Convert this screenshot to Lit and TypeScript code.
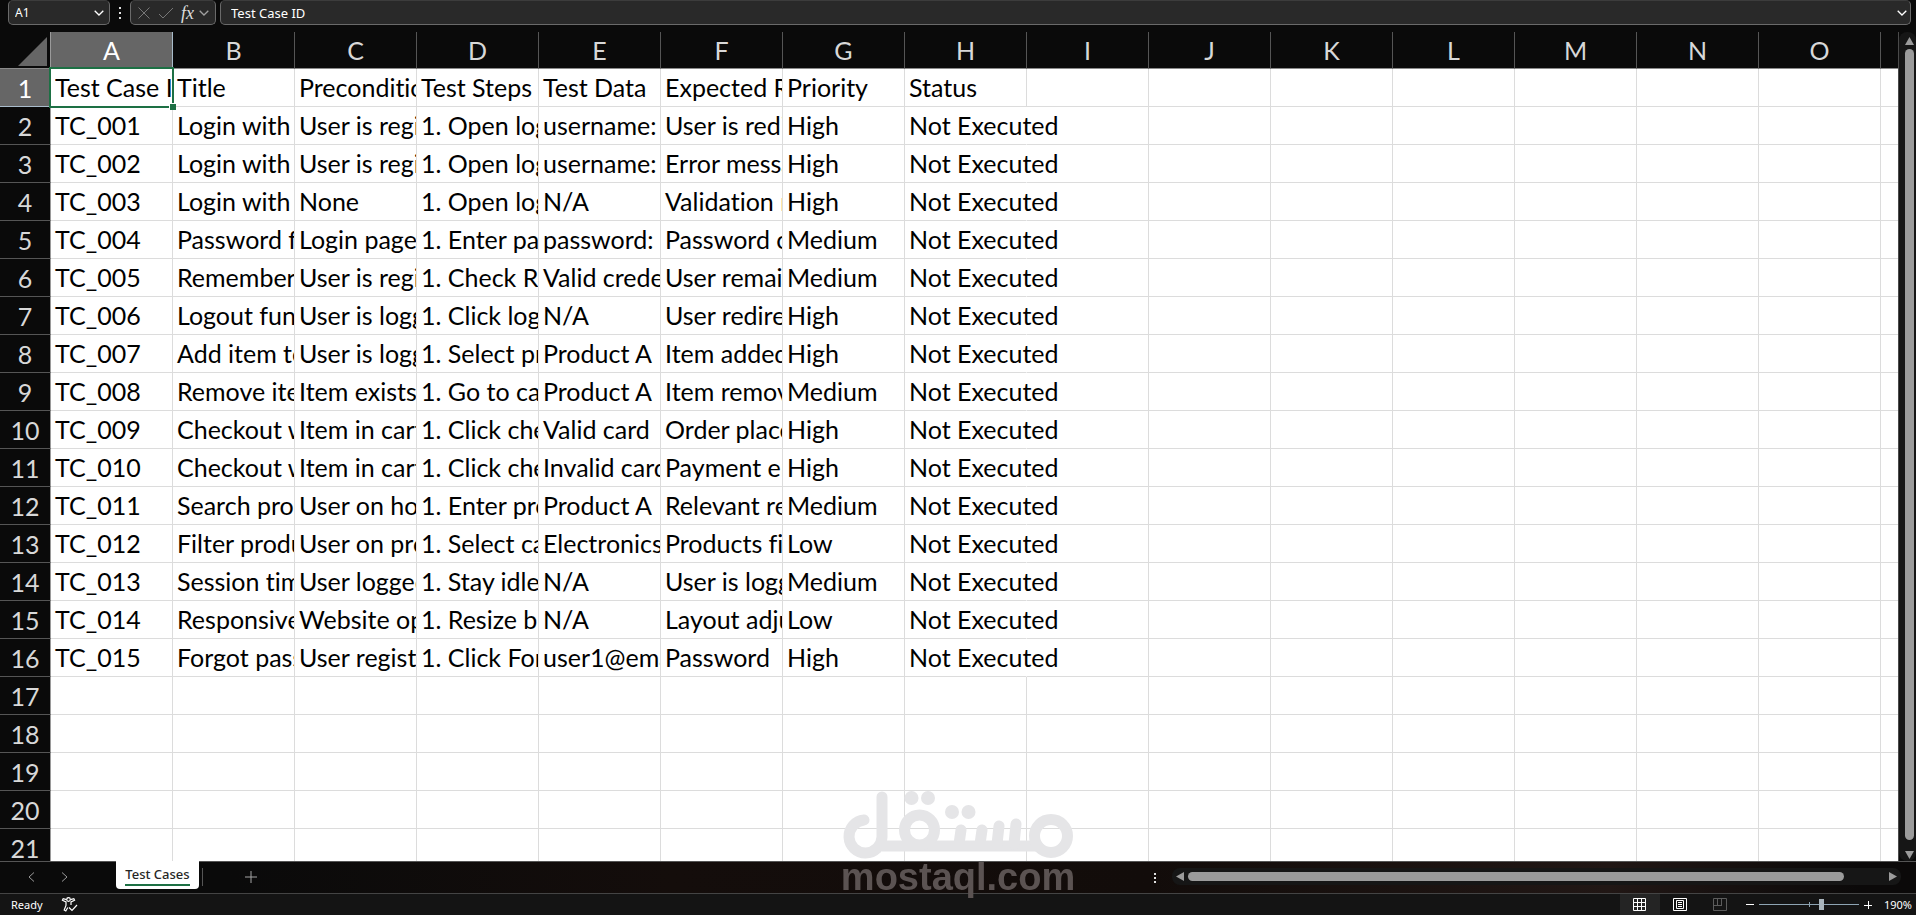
import { LitElement, html, css } from "lit";
import { customElement, state } from "lit/decorators.js";

const COLUMNS = "ABCDEFGHIJKLMNO".split("");
const ROW_COUNT = 21;

const CELLS: string[][] = [
  ["Test Case ID", "Title", "Preconditions", "Test Steps", "Test Data", "Expected Result", "Priority", "Status"],
  ["TC_001", "Login with valid", "User is registered", "1. Open login page", "username: user1", "User is redirected", "High", "Not Executed"],
  ["TC_002", "Login with invalid", "User is registered", "1. Open login page", "username: user1", "Error message", "High", "Not Executed"],
  ["TC_003", "Login with empty", "None", "1. Open login page", "N/A", "Validation messages", "High", "Not Executed"],
  ["TC_004", "Password field", "Login page open", "1. Enter password", "password: 123", "Password characters", "Medium", "Not Executed"],
  ["TC_005", "Remember me", "User is registered", "1. Check Remember", "Valid credentials", "User remains", "Medium", "Not Executed"],
  ["TC_006", "Logout functionality", "User is logged in", "1. Click logout", "N/A", "User redirected", "High", "Not Executed"],
  ["TC_007", "Add item to cart", "User is logged in", "1. Select product", "Product A", "Item added", "High", "Not Executed"],
  ["TC_008", "Remove item", "Item exists in cart", "1. Go to cart", "Product A", "Item removed", "Medium", "Not Executed"],
  ["TC_009", "Checkout with valid", "Item in cart", "1. Click checkout", "Valid card", "Order placed", "High", "Not Executed"],
  ["TC_010", "Checkout with invalid", "Item in cart", "1. Click checkout", "Invalid card", "Payment error", "High", "Not Executed"],
  ["TC_011", "Search product", "User on homepage", "1. Enter product", "Product A", "Relevant results", "Medium", "Not Executed"],
  ["TC_012", "Filter products", "User on products", "1. Select category", "Electronics", "Products filtered", "Low", "Not Executed"],
  ["TC_013", "Session timeout", "User logged in", "1. Stay idle", "N/A", "User is logged out", "Medium", "Not Executed"],
  ["TC_014", "Responsive layout", "Website open", "1. Resize browser", "N/A", "Layout adjusts", "Low", "Not Executed"],
  ["TC_015", "Forgot password", "User registered", "1. Click Forgot", "user1@email.com", "Password", "High", "Not Executed"],
];

const chevron = html`<svg class="chevron" viewBox="0 0 10 6" aria-hidden="true">
  <path d="M.7.7 5 5 9.3.7" />
</svg>`;

@customElement("app-root")
export class AppRoot extends LitElement {
  @state() private zoomLevel = 190;

  static styles = css`
    :host {
      display: flex;
      flex-direction: column;
      height: 100vh;
      overflow: hidden;
      position: relative;
      background: #0a0a0a;
      color: #fff;
      font-family: "Noto Sans", sans-serif;
      font-size: 12px;
    }
    * { box-sizing: border-box; }
    button, input {
      font: inherit;
      color: inherit;
      background: none;
      border: 0;
      padding: 0;
      margin: 0;
    }
    svg { display: block; fill: none; stroke: currentColor; }
    .chevron { width: 10px; height: 6px; stroke-width: 1.3; }

    .formula-bar {
      display: flex;
      align-items: stretch;
      height: 32px;
      padding: 0 5px 7px 8px;
      flex: none;
    }
    .box {
      display: flex;
      align-items: center;
      background: #292929;
      border: 1px solid #6a6a6a;
      border-top-color: #3c3c3c;
      border-radius: 5px;
    }
    .name-box { width: 102px; padding: 0 5px 0 6px; }
    .name-box input { flex: 1; min-width: 0; }
    .grip { width: 20px; display: grid; place-items: center; }
    .grip svg { width: 4px; height: 12px; fill: #e0e0e0; stroke: none; }
    .tools { width: 86px; padding: 0 2px 0 6px; gap: 8px; color: #777; }
    .tools .mark { width: 14px; height: 14px; }
    .tools .fx-group { display: flex; align-items: center; gap: 5px; color: #ddd; }
    .tools .chevron { color: #a0a0a0; }
    .fx { font: italic 18px/20px "Liberation Serif", serif; }
    .formula { flex: 1; margin-left: 4px; padding: 0 3px 0 10px; }
    .formula input { flex: 1; min-width: 0; font-size: 13px; }

    .workspace { flex: 1; min-height: 0; display: flex; }
    .sheet { flex: 1; min-width: 0; overflow: hidden; border-right: 1px solid #4a4a4a; }
    table {
      border-collapse: separate;
      border-spacing: 0;
      table-layout: fixed;
      width: 100%;
      font-variant-ligatures: none;
    }
    .col-index { width: 51px; }
    .col { width: 122px; }
    th { font: 400 25px/36px Lato, sans-serif; color: #d8d8d8; padding: 0; background: #0a0a0a; }
    thead th { height: 37px; border-right: 1px solid #555; border-bottom: 1px solid #8a8a8a; }
    thead th:last-child { border-right: 0; }
    thead th:first-child, tbody th { border-right: 1px solid #9a9a9a; }
    thead th.active, tbody th.active { background: #666; color: #fff; border-color: #a9bccb; }
    tbody th { height: 38px; border-bottom: 1px solid #555; }
    .corner svg { width: 29px; height: 29px; margin: 3px 3px 0 auto; fill: #666; stroke: none; }
    td {
      height: 38px;
      padding: 0 0 0 4px;
      background: #fff;
      color: #000;
      border-right: 1px solid #dcdcdc;
      border-bottom: 1px solid #dcdcdc;
      font: 25px/37px Lato, sans-serif;
      font-variant-ligatures: none;
      white-space: nowrap;
      overflow: hidden;
    }
    td:last-child { border-right: 0; }
    td.spill { overflow: visible; border-right-color: #fff; position: relative; z-index: 1; }
    td.selected { position: relative; overflow: visible; }
    .clip { display: block; overflow: hidden; }
    .selected::after {
      content: "";
      position: absolute;
      inset: -2px;
      border: 2px solid #1d7044;
    }
    .handle {
      position: absolute;
      z-index: 1;
      right: -4px;
      bottom: -4px;
      width: 7px;
      height: 7px;
      background: #1d7044;
      border: solid #fff;
      border-width: 1px 0 0 1px;
    }

    .bar { background: #161616; border-radius: 8px; display: flex; align-items: center; color: #9b9b9b; }
    .bar svg { fill: currentColor; stroke: none; flex: none; }
    .thumb { background: #9b9b9b; border-radius: 5px; }
    .vertical { flex-direction: column; width: 17px; padding: 5px 2px 2px 6px; gap: 4px; }
    .vertical .thumb { width: 9px; flex: 1; margin-bottom: 7px; }
    .vertical svg { width: 9px; height: 8px; }

    .tab-bar {
      flex: none;
      display: flex;
      height: 33px;
      border-top: 1px solid #555;
      border-bottom: 1px solid #444;
      background: linear-gradient(90deg, #0a0a0a 12%, #140d0b 35%, #120c0a 60%, #211715 84%, #0b0909 97%);
    }
    .nav { display: flex; align-items: center; gap: 26px; padding: 0 48px 2px 28px; color: #9a9a9a; }
    .nav svg { width: 7px; height: 10px; }
    .tab {
      width: 83px;
      height: 28px;
      margin-top: -1px;
      background: #fff;
      color: #262626;
      border-radius: 0 0 4px 4px;
      font-size: 13px;
      font-weight: 500;
      line-height: 20px;
      white-space: nowrap;
    }
    .tab span { display: inline-block; border-bottom: 2px solid #1d7044; }
    .tab-line { width: 1px; height: 18px; margin: 6px 0 0 3px; background: #555; }
    .add { margin-left: 42px; padding-bottom: 2px; color: #a5a5a5; }
    .add svg { width: 12px; height: 12px; }
    .tab-space { flex: 1; }
    .tab-bar .grip { width: 20px; margin-right: 7px; }
    .horizontal { width: 729px; height: 17px; margin: 6px 15px 0 0; padding: 0 4px; gap: 4px; }
    .horizontal .thumb { height: 9px; flex: 1; margin-right: 41px; }
    .horizontal svg { width: 8px; height: 9px; }

    .status {
      flex: none;
      display: flex;
      align-items: center;
      height: 21px;
      padding: 0 4px 0 11px;
      background: #141414;
      font-size: 11px;
    }
    .access { margin-left: 18px; }
    .access svg { width: 17px; height: 15px; }
    .status-space { flex: 1; }
    .view { width: 40px; height: 21px; display: grid; place-items: center; color: #fff; }
    .view.on { background: #242424; }
    .view svg { width: 14px; height: 13px; }
    .view.dim { color: #5c5c5c; }
    .step svg { width: 8px; height: 8px; }
    .zoom { display: flex; align-items: center; gap: 5px; margin-left: 6px; }
    .slider {
      appearance: none;
      width: 100px;
      height: 11px;
      background:
        linear-gradient(#8ea4b3, #8ea4b3) 50% 50% / 1px 5px no-repeat,
        linear-gradient(#8ea4b3, #8ea4b3) 50% 50% / 100% 1px no-repeat;
    }
    .slider::-webkit-slider-thumb { appearance: none; width: 5px; height: 11px; background: #a9b4bc; }
    .percent { width: 40px; text-align: right; }

    .watermark {
      position: absolute;
      left: 44%;
      bottom: 19px;
      width: 230px;
      pointer-events: none;
      z-index: 5;
    }
    .watermark svg { width: 230px; height: 68px; color: #e5e5e7; mix-blend-mode: multiply; }
    .domain {
      display: flex;
      justify-content: center;
      font: 700 38px/37px "Liberation Sans", sans-serif;
      color: #5b5352;
    }
  `;

  private renderCell(row: number, col: number) {
    const text = CELLS[row]?.[col] ?? "";
    if (row === 0 && col === 0) {
      return html`<td class="selected"><span class="clip">${text}</span><span class="handle"></span></td>`;
    }
    return html`<td class=${col === 7 && row > 0 && text ? "spill" : ""}>${text}</td>`;
  }

  render() {
    return html`
      <div class="formula-bar">
        <div class="box name-box">
          <input aria-label="Name box" .value=${"A1"} />
          <button aria-label="Named ranges">${chevron}</button>
        </div>
        <div class="grip"><svg viewBox="0 0 4 12"><path d="M1 0h2v2H1zM1 5h2v2H1zM1 10h2v2H1z" /></svg></div>
        <div class="box tools">
          <button aria-label="Cancel"><svg class="mark" viewBox="0 0 14 14"><path d="M1.5 1.5l11 11M12.5 1.5l-11 11" /></svg></button>
          <button aria-label="Enter"><svg class="mark" viewBox="0 0 14 14"><path d="M0 8l4 4L14 2" /></svg></button>
          <button class="fx-group" aria-label="Insert function"><span class="fx">fx</span>${chevron}</button>
        </div>
        <div class="box formula">
          <input aria-label="Formula" .value=${"Test Case ID"} />
          <button aria-label="Expand formula bar">${chevron}</button>
        </div>
      </div>

      <div class="workspace">
        <div class="sheet">
          <table>
            <colgroup>
              <col class="col-index" />
              ${COLUMNS.map(() => html`<col class="col" />`)}
              <col />
            </colgroup>
            <thead>
              <tr>
                <th class="corner"><svg viewBox="0 0 29 29"><path d="M29 0v29H0z" /></svg></th>
                ${COLUMNS.map((name, i) => html`<th scope="col" class=${i === 0 ? "active" : ""}>${name}</th>`)}
                <th></th>
              </tr>
            </thead>
            <tbody>
              ${Array.from({ length: ROW_COUNT }, (_, row) => html`
                <tr>
                  <th scope="row" class=${row === 0 ? "active" : ""}>${row + 1}</th>
                  ${COLUMNS.map((_name, col) => this.renderCell(row, col))}
                  <td></td>
                </tr>`)}
            </tbody>
          </table>
        </div>
        <div class="bar vertical">
          <svg viewBox="0 0 9 8"><path d="M4.5 0 9 8H0z" /></svg>
          <div class="thumb"></div>
          <svg viewBox="0 0 9 8"><path d="M0 0h9L4.5 8z" /></svg>
        </div>
      </div>

      <div class="tab-bar">
        <div class="nav">
          <button aria-label="Previous sheet"><svg viewBox="0 0 7 10"><path d="M6 .5 1 5l5 4.5" /></svg></button>
          <button aria-label="Next sheet"><svg viewBox="0 0 7 10"><path d="M1 .5 6 5 1 9.5" /></svg></button>
        </div>
        <button class="tab"><span>Test Cases</span></button>
        <div class="tab-line"></div>
        <button class="add" aria-label="New sheet"><svg viewBox="0 0 12 12"><path d="M6 0v12M0 6h12" /></svg></button>
        <div class="tab-space"></div>
        <div class="grip"><svg viewBox="0 0 4 12"><path d="M1 1h2v2H1zM1 5h2v2H1zM1 9h2v2H1z" /></svg></div>
        <div class="bar horizontal">
          <svg viewBox="0 0 8 9"><path d="M8 0v9L0 4.5z" /></svg>
          <div class="thumb"></div>
          <svg viewBox="0 0 8 9"><path d="M0 0v9l8-4.5z" /></svg>
        </div>
      </div>

      <div class="status">
        <span>Ready</span>
        <button class="access" aria-label="Accessibility">
          <svg viewBox="0 0 17 15" stroke-width="1.2">
            <circle cx="7.5" cy="2.5" r="1.8" />
            <path d="M5.6 2.6 2.2 1.6 1.4 3.3 5 5v3.500l-1.800 4.500 1.600 1 2-3.500M9.400 2.600l3.400-1 .8 1.700L10 5v3M8 10.500l3 3 5-5.500" />
          </svg>
        </button>
        <div class="status-space"></div>
        <button class="view on" aria-label="Normal view"><svg viewBox="0 0 14 13"><path d="M.5.5h12v12H.5zM4.5.5v12M8.5.5v12M.5 4.5h12M.5 8.5h12" /></svg></button>
        <button class="view" aria-label="Page layout"><svg viewBox="0 0 14 13"><path d="M.5.5h13v12H.5zM3.5 2.5h7v8h-7zM5 4.5h4M5 6.5h4M5 8.5h4" /></svg></button>
        <button class="view dim" aria-label="Page break preview"><svg viewBox="0 0 14 13"><path d="M.5.5h13v12H.5zM4.5.5v7M.5 7.5h8.5M8.5.5v7" /></svg></button>
        <div class="zoom">
          <button class="step" aria-label="Zoom out"><svg viewBox="0 0 8 8"><path d="M0 3.5h8" /></svg></button>
          <input class="slider" type="range" aria-label="Zoom" min="10" max="310" .value=${String(this.zoomLevel + 10)} />
          <button class="step" aria-label="Zoom in"><svg viewBox="0 0 8 8"><path d="M0 4.5h8M4.5 0v8" /></svg></button>
        </div>
        <span class="percent">${this.zoomLevel}%</span>
      </div>

      <div class="watermark">
        <svg viewBox="0 0 230 68" stroke-width="11" stroke-linecap="round">
          <path d="M21 29A16.5 16.5 0 1 0 39 46V6" />
          <path d="M39 55H195" stroke-linecap="butt" />
          <circle cx="76.5" cy="39" r="15" />
          <circle cx="208" cy="45" r="16.5" />
          <path d="M118 39l-2 14M139 39l-2 14M156 35l-2 18M173 33l-2 20" />
          <g fill="currentColor" stroke="none">
            <circle cx="68.5" cy="7" r="7" /><circle cx="85" cy="7" r="7" />
            <circle cx="109" cy="21" r="7" /><circle cx="125.5" cy="21" r="7" />
          </g>
        </svg>
        <div class="domain">mostaql.com</div>
      </div>
    `;
  }
}
